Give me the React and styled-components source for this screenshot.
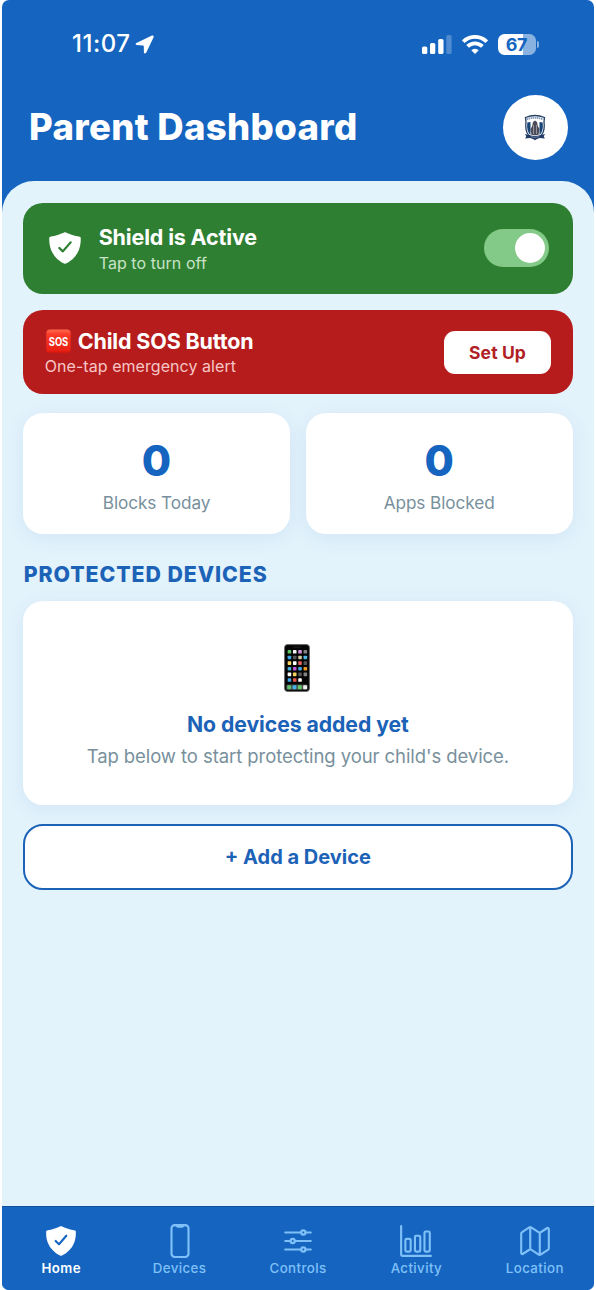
import React from 'react'
import styled, { createGlobalStyle } from 'styled-components';
import {
    IoShieldCheckmark,
    IoPhonePortraitOutline,
    IoOptionsOutline,
    IoBarChartOutline,
    IoMapOutline,
} from 'react-icons/io5';

const GlobalStyle = createGlobalStyle`
    * {
        box-sizing: border-box;
    }
    body {
        margin: 0;
        background: #ffffff;
        font-family: Inter, "Liberation Sans", sans-serif;
    }
`

const Screen = styled.div`
    display: flex;
    flex-direction: column;
    width: 592px;
    height: 1290px;
    margin: 0 auto;
    border-radius: 7px;
    overflow: hidden;
    background: #1565c0;
`

const StatusBar = styled.div`
    display: flex;
    align-items: center;
    justify-content: space-between;
    height: 88px;
    padding: 0 55px 0 70px;
    color: #ffffff;
`

const StatusGroup = styled.div`
    display: flex;
    align-items: center;
    gap: ${props => props.$gap}px;
`

const Time = styled.span`
    font-size: 24px;
    font-weight: 500;
    line-height: 30px;
    letter-spacing: 0.5px;
`

const Battery = styled.div`
    display: flex;
    align-items: center;
    gap: 1px;
`

const BatteryBody = styled.div`
    width: 38px;
    height: 21px;
    border-radius: 6.5px;
    background: linear-gradient(to right, #ffffff 67%, #8ab2e0 67%);
    color: #1565c0;
    font-size: 18px;
    font-weight: 700;
    line-height: 21px;
    text-align: center;
    letter-spacing: -0.4px;
`

const BatteryTip = styled.div`
    width: 2.5px;
    height: 7px;
    border-radius: 0 3px 3px 0;
    background: #8ab2e0;
`

const Header = styled.header`
    display: flex;
    align-items: center;
    justify-content: space-between;
    height: 93px;
    padding: 0 26.5px 15px 27px;
`

const Heading = styled.h1`
    margin: 0;
    color: #ffffff;
    font-size: 36.5px;
    font-weight: 800;
    line-height: 44px;
    letter-spacing: 0.33px;
`

const Avatar = styled.div`
    display: flex;
    align-items: center;
    justify-content: center;
    width: 65px;
    height: 65px;
    border-radius: 50%;
    background: #ffffff;
`

const Sheet = styled.main`
    flex: 1;
    padding: 21.5px 21.5px 0 21.2px;
    border-radius: 32px 32px 0 0;
    background: #e3f3fc;
`

const Banner = styled.section`
    display: flex;
    align-items: center;
    height: ${props => props.$height}px;
    margin-bottom: ${props => props.$gap}px;
    padding: ${props => props.$padding};
    border-radius: 20px;
    background: ${props => props.$color};
    color: #ffffff;
`

const BannerText = styled.div`
    flex: 1;
    margin-left: ${props => props.$indent || 0}px;
`

const BannerTitle = styled.div`
    display: flex;
    align-items: center;
    gap: 7px;
    font-size: 21.5px;
    font-weight: 700;
    line-height: 26px;
    letter-spacing: -0.16px;
`

const BannerNote = styled.div`
    color: ${props => props.$color};
    font-size: 16px;
    line-height: 20px;
    margin-top: ${props => props.$top}px;
    letter-spacing: 0.06px;
`

const Toggle = styled.div`
    display: flex;
    align-items: center;
    justify-content: flex-end;
    width: 65px;
    height: 38px;
    padding: 4px;
    border-radius: 19px;
    background: #83c987;
`

const Knob = styled.div`
    width: 30px;
    height: 30px;
    border-radius: 50%;
    background: #ffffff;
`

const SetUpButton = styled.button`
    width: 107px;
    height: 43px;
    border: none;
    border-radius: 11px;
    background: #ffffff;
    color: #b12024;
    font-family: inherit;
    font-size: 17.5px;
    font-weight: 700;
    letter-spacing: 0.1px;
`

const Stats = styled.div`
    display: grid;
    grid-template-columns: 1fr 1fr;
    gap: 16px;
`

const Card = styled.div`
    display: flex;
    flex-direction: column;
    align-items: center;
    height: ${props => props.$height}px;
    padding-top: ${props => props.$top}px;
    border-radius: 20px;
    background: #ffffff;
    box-shadow: 0 4px 20px rgba(21, 80, 160, 0.08);
`

const StatValue = styled.div`
    color: #1565c0;
    font-size: 42.5px;
    font-weight: 800;
    line-height: 52px;
`

const StatLabel = styled.div`
    margin-top: 4px;
    color: #78909c;
    font-size: 17.2px;
    line-height: 24px;
    letter-spacing: -0.08px;
`

const SectionTitle = styled.h2`
    margin: 27px 0 13px 0.5px;
    color: #1c62b7;
    font-size: 21.3px;
    font-weight: 800;
    line-height: 27px;
    letter-spacing: 0.93px;
`

const EmptyTitle = styled.div`
    margin-top: 18px;
    color: #1c62b7;
    font-size: 21.2px;
    font-weight: 700;
    line-height: 28px;
    letter-spacing: -0.05px;
`

const EmptyText = styled.div`
    margin-top: 4.5px;
    color: #78909c;
    font-size: 18.5px;
    line-height: 26px;
    letter-spacing: -0.08px;
`

const AddButton = styled.button`
    display: block;
    width: 100%;
    height: 66px;
    margin-top: 19px;
    border: 2px solid #1c62b7;
    border-radius: 20px;
    background: #ffffff;
    color: #1c62b7;
    font-family: inherit;
    font-size: 20px;
    font-weight: 700;
`

const TabBar = styled.nav`
    display: grid;
    grid-template-columns: repeat(5, 1fr);
    height: 84px;
    border-top: 1px solid #10509f;
    background: #1565c0;
`

const Tab = styled.div`
    display: flex;
    flex-direction: column;
    align-items: center;
    padding-top: 17px;
    color: ${props => props.$active ? '#ffffff' : '#7fc0f8'};
    font-size: 13.3px;
    font-weight: ${props => props.$active ? 600 : 550};
    line-height: 18px;
    letter-spacing: 0.4px;

    svg {
        margin-bottom: 1px;
    }
`

const LocationArrow = () => (
    <svg width="19" height="19" viewBox="0 0 19 19" fill="currentColor">
        <path d="M17 .6 1.400 7.900Q-.3 9.200 1.600 10.100L8 10.500Q8.800 10.700 8.800 11.500L8.900 17.400Q9.600 19.300 11.200 17.700L18.600 2.300Q19 .2 17 .6Z" />
    </svg>
)

const Signal = () => (
    <svg width="30" height="19" viewBox="0 0 30 19" fill="currentColor">
        <rect x="0" y="11.500" width="5.300" height="7.500" rx="1.600" />
        <rect x="8" y="8" width="5.300" height="11" rx="1.600" />
        <rect x="16.200" y="4" width="5.300" height="15" rx="1.600" />
        <rect x="24.300" y="0" width="5.300" height="19" rx="1.600" opacity="0.25" />
    </svg>
)

const Wifi = () => (
    <svg width="26" height="19" viewBox="0 0 26 19" fill="none" stroke="currentColor" strokeWidth="3.800">
        <path d="M1.300 6.700a16.600 16.600 0 0 1 23.400 0" />
        <path d="M5.600 11.400a10.500 10.500 0 0 1 14.800 0" />
        <path d="M13 18.900 9.300 15.200a5.200 5.200 0 0 1 7.400 0z" fill="currentColor" stroke="none" />
    </svg>
)

const Crest = () => (
    <svg width="22" height="27" viewBox="0 0 22 27">
        <path d="M1.500 3.500Q11-.5 20.500 3.500L20 8q1.200 10-3.500 14L11 25.500 5.500 22Q.8 18 2 8Z" fill="#ffffff" stroke="#263f67" strokeWidth="1.300" />
        <path d="M3.300 8.500 6.500 8v13Q2.300 17.500 3.300 8.500ZM18.700 8.500 15.500 8v13q4.200-3.500 3.200-12.500Z" fill="#174578" />
        <path d="M2.500 5.500q8.500-3.500 17 0" fill="none" stroke="#8198b2" strokeWidth="1.800" strokeDasharray="1.500 .6" />
        <path d="m9 8 2-1.500L13 8l.8 4 1.700 3-1 6h-7l-1-6 1.700-3Z" fill="#4b4b59" />
        <path d="M9.500 11v9M12.500 11v9" stroke="#a9a6aa" strokeWidth=".8" />
        <path d="m1 20 5 1.200q5 1.300 10 0l5-1.200-1.200 2.200 1 2.300-5-.5Q11 26 6.200 24l-5 .5 1-2.300Z" fill="#243c68" />
        <path d="M7 22.800q4 .9 8 0" fill="none" stroke="#8da3bf" strokeWidth=".7" />
    </svg>
)

const SosFrame = styled.svg`
    overflow: visible;
`

const SosBadge = () => (
    <SosFrame width="26" height="26" viewBox="0 0 26 26">
        <defs>
            <linearGradient id="sos" x1="0" y1="0" x2="0" y2="1">
                <stop offset="0" stopColor="#ff6b50" />
                <stop offset="0.200" stopColor="#fa3c2a" />
                <stop offset="0.900" stopColor="#e91f12" />
                <stop offset="1" stopColor="#cf170e" />
            </linearGradient>
        </defs>
        <rect x="1.200" y="1.500" width="24.500" height="23.500" rx="4" fill="url(#sos)" />
        <text x="13.500" y="17.600" fill="#ffffff" textAnchor="middle" fontSize="11.500" fontWeight="700" letterSpacing="0" textLength="19.500" lengthAdjust="spacingAndGlyphs">SOS</text>
    </SosFrame>
)

const appColors = [
    ['#5fc465', '#f4f4f4', '#d591e0', '#848484'],
    ['#3da9e5', '#555555', '#d6c9a1', '#4fb6e8'],
    ['#f6d365', '#ffffff', '#e9605a', '#555555'],
    ['#48aeda', '#bd55d9', '#42a9e9', '#ee981f'],
    ['#ffffff', '#f3d15d', '#555555', '#848484'],
    ['#42a6e5', '#e7564d', '#ffffff'],
]

const dockColors = ['#62bf6c', '#42b4e9', '#65c965', '#f1f1f1']

const PhoneFrame = styled.svg`
    margin-right: 2px;
`

const PhoneIcon = () => (
    <PhoneFrame width="26" height="48" viewBox="0 0 27 48" preserveAspectRatio="none">
        <rect x="0.600" y="0.600" width="25.800" height="46.800" rx="3" fill="#050505" stroke="#686868" strokeWidth="1" />
        <rect x="9.500" y="2.500" width="8" height="1.600" rx="0.800" fill="#171717" />
        {appColors.map((row, y) => row.map((color, x) => (
            <rect key={`${y}-${x}`} x={3.8 + x * 5.5} y={6 + y * 5.65} width="3.700" height="3.600" rx="0.700" fill={color} />
        )))}
        <rect x="2.300" y="40.500" width="22.400" height="5.300" rx="1.500" fill="#494d4a" />
        {dockColors.map((color, x) => (
            <rect key={color} x={3.4 + x * 5.5} y="41.200" width="4" height="4" rx="0.900" fill={color} />
        ))}
    </PhoneFrame>
)

const tabs = [
    { label: 'Home', Icon: IoShieldCheckmark, active: true },
    { label: 'Devices', Icon: IoPhonePortraitOutline },
    { label: 'Controls', Icon: IoOptionsOutline },
    { label: 'Activity', Icon: IoBarChartOutline },
    { label: 'Location', Icon: IoMapOutline },
]

const App = () => {
    return (
        <>
            <GlobalStyle />
            <Screen>
                <StatusBar>
                    <StatusGroup $gap={4.5}>
                        <Time>11:07</Time>
                        <LocationArrow />
                    </StatusGroup>
                    <StatusGroup $gap={10}>
                        <Signal />
                        <Wifi />
                        <Battery>
                            <BatteryBody>67</BatteryBody>
                            <BatteryTip />
                        </Battery>
                    </StatusGroup>
                </StatusBar>
                <Header>
                    <Heading>Parent Dashboard</Heading>
                    <Avatar><Crest /></Avatar>
                </Header>
                <Sheet>
                    <Banner $color="#2f7f32" $height={91.5} $gap={16} $padding="0 24px 0 23.5px">
                        <IoShieldCheckmark size={36} />
                        <BannerText $indent={16}>
                            <BannerTitle>Shield is Active</BannerTitle>
                            <BannerNote $color="#c8e3c9" $top={3}>Tap to turn off</BannerNote>
                        </BannerText>
                        <Toggle><Knob /></Toggle>
                    </Banner>
                    <Banner $color="#b71c1c" $height={84} $gap={19} $padding="0 21.5px">
                        <BannerText>
                            <BannerTitle><SosBadge />Child SOS Button</BannerTitle>
                            <BannerNote $color="#f6c6c6" $top={2}>One-tap emergency alert</BannerNote>
                        </BannerText>
                        <SetUpButton>Set Up</SetUpButton>
                    </Banner>
                    <Stats>
                        <Card $height={121} $top={22}>
                            <StatValue>0</StatValue>
                            <StatLabel>Blocks Today</StatLabel>
                        </Card>
                        <Card $height={121} $top={22}>
                            <StatValue>0</StatValue>
                            <StatLabel>Apps Blocked</StatLabel>
                        </Card>
                    </Stats>
                    <SectionTitle>PROTECTED DEVICES</SectionTitle>
                    <Card $height={204} $top={43}>
                        <PhoneIcon />
                        <EmptyTitle>No devices added yet</EmptyTitle>
                        <EmptyText>Tap below to start protecting your child's device.</EmptyText>
                    </Card>
                    <AddButton>+ Add a Device</AddButton>
                </Sheet>
                <TabBar>
                    {tabs.map(({ label, Icon, active }) => (
                        <Tab key={label} $active={active}>
                            <Icon size={34} />
                            {label}
                        </Tab>
                    ))}
                </TabBar>
            </Screen>
        </>
    )
}

export default App
